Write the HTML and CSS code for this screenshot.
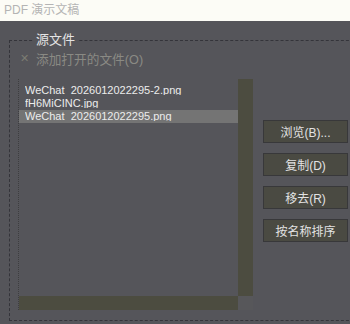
FILE: index.html
```html
<!DOCTYPE html>
<html lang="zh-Hans">
<head>
  <meta charset="UTF-8" />
  <title>PDF 演示文稿</title>
  <link rel="stylesheet" href="styles.css">
</head>
<body>

<div id="titleBar">PDF 演示文稿</div>

<div id="dialog">
  <fieldset class="group">
    <legend>源文件</legend>

    <div class="group-body">
      <div class="left-col">
        <label class="check disabled">
          <span class="check-box">✕</span>
          <span>添加打开的文件(O)</span>
        </label>

        <div class="file-list">
          <div class="list-items">
            <div class="list-item"><span>WeChat_2026012022295-2.png</span></div>
            <div class="list-item"><span>fH6MiCINC.jpg</span></div>
            <div class="list-item selected"><span>WeChat_2026012022295.png</span></div>
          </div>
          <div class="vscroll"></div>
          <div class="hscroll"></div>
          <div class="corner"></div>
        </div>
      </div>

      <div class="button-col">
        <button>浏览(B)...</button>
        <button>复制(D)</button>
        <button>移去(R)</button>
        <button>按名称排序</button>
      </div>
    </div>
  </fieldset>
</div>

</body>
</html>
```

FILE: styles.css
```css
body, html {
  margin: 0;
  width: 350px;
  height: 324px;
  overflow: hidden;
  font-family: "Liberation Sans", "Noto Sans CJK SC", sans-serif;
  background: #55555a;
}

#titleBar {
  height: 21px;
  line-height: 20px;
  padding-left: 4px;
  background: #fcfcf6;
  color: #b4b4b4;
  font-size: 12px;
}

#dialog {
  padding: 12px 0 0 9px;
}

.group {
  margin: 0;
  padding: 4px 0 0 8px;
  width: 360px;
  height: 288px;
  box-sizing: border-box;
  border: 1px dashed #34343a;
}

.group legend {
  margin-left: 15px;
  padding: 0 3px;
  color: #e4e4e4;
  font-size: 13px;
  line-height: 14px;
}

.group-body {
  display: flex;
  gap: 10px;
}

.left-col {
  display: flex;
  flex-direction: column;
  gap: 14px;
}

.check {
  display: flex;
  align-items: center;
  gap: 7px;
  height: 14px;
  padding-left: 2px;
  font-size: 12.7px;
}

.check.disabled {
  color: #8a8a84;
}

.check-box {
  font-size: 11px;
  color: #7c7c72;
}

.file-list {
  display: grid;
  grid-template-columns: 219px 15px;
  grid-template-rows: 217px 14px;
  width: 234px;
  border-left: 1px dotted #3e3e40;
}

.list-items {
  padding-top: 5px;
}

.list-item {
  height: 13px;
  padding-left: 6px;
  font-size: 11px;
  color: #ececec;
  white-space: nowrap;
}

.list-item span {
  display: block;
  height: 11px;
  line-height: 13px;
  overflow: hidden;
}

.list-item.selected {
  background: #747474;
}

.vscroll,
.hscroll {
  background: #4c4c40;
}

.corner {
  background: #57575a;
}

.button-col {
  display: flex;
  flex-direction: column;
  gap: 10px;
  margin-top: 69px;
}

button {
  width: 85px;
  height: 23px;
  padding: 0;
  border: 1px solid #38383a;
  background: #4a4a42;
  color: #e2e2e2;
  font-family: "Liberation Sans", "Noto Sans CJK SC", sans-serif;
  font-size: 12px;
}
```
